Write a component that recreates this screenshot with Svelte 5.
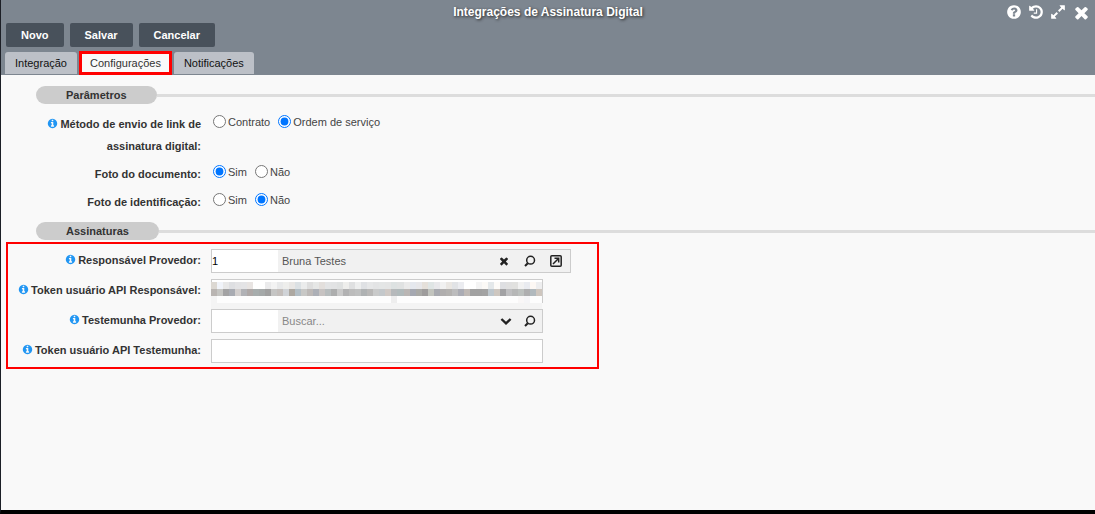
<script>

  let buttons = ["Novo", "Salvar", "Cancelar"]

  let tabs = ["Integração", "Configurações", "Notificações"]

  let active_tab = "Configurações"

  let method = "ordem"

  let document_photo = "sim"

  let id_photo = "nao"

  let provider_id = "1"

  let provider_name = "Bruna Testes"

  let provider_token = ""

  let witness_id = ""

  let witness_name = ""

  let witness_token = ""

  // 1792 unit icon grid
  let ring = "M1664 896q0 209-103 385.5t-279.5 279.5-385.5 103-385.5-103-279.5-279.5-103-385.5 103-385.5 279.5-279.5 385.5-103 385.5 103 279.5 279.5 103 385.5z"

  let icons = {
    help: "M1024 1376v-192q0-14-9-23t-23-9h-192q-14 0-23 9t-9 23v192q0 14 9 23t23 9h192q14 0 23-9t9-23zm256-672q0-88-55.5-163t-138.5-116-170-41q-243 0-371 213-15 24 8 42l132 100q7 6 19 6 16 0 25-12 53-68 86-92 34-24 86-24 48 0 85.5 26t37.5 59q0 38-20 61t-68 45q-63 28-115.5 86.5t-52.5 125.5v36q0 14 9 23t23 9h192q14 0 23-9t9-23q0-19 21.5-49.5t54.5-49.5q32-18 49-28.5t46-35 44.5-48 28-60.5 12.5-81z" + ring,
    history: "M1664 896q0 156-61 298t-164 245-245 164-298 61q-172 0-327-72.5t-264-204.5q-7-10-6.5-22.5t8.5-20.5l137-138q10-9 25-9 16 2 23 12 73 95 179 147t225 52q104 0 198.5-40.5t163.5-109.5 109.5-163.5 40.5-198.5-40.5-198.5-109.5-163.5-163.5-109.5-198.5-40.5q-98 0-188 35.5t-160 101.5l137 138q31 30 14 69-17 40-59 40h-448q-26 0-45-19t-19-45v-448q0-42 40-59 39-17 69 14l130 129q107-101 244.5-156.5t284.5-55.5q156 0 298 61t245 164 164 245 61 298zm-640-288v448q0 14-9 23t-23 9h-320q-14 0-23-9t-9-23v-64q0-14 9-23t23-9h224v-352q0-14 9-23t23-9h64q14 0 23 9t9 23z",
    expand: "M883 1056q0 13-10 23l-332 332 144 144q19 19 19 45t-19 45-45 19h-448q-26 0-45-19t-19-45v-448q0-26 19-45t45-19 45 19l144 144 332-332q10-10 23-10t23 10l114 114q10 10 10 23zm781-864v448q0 26-19 45t-45 19-45-19l-144-144-332 332q-10 10-23 10t-23-10l-114-114q-10-10-10-23t10-23l332-332-144-144q-19-19-19-45t19-45 45-19h448q26 0 45 19t19 45z",
    close: "M1490 1322q0 40-28 68l-136 136q-28 28-68 28t-68-28l-294-294-294 294q-28 28-68 28t-68-28l-136-136q-28-28-28-68t28-68l294-294-294-294q-28-28-28-68t28-68l136-136q28-28 68-28t68 28l294 294 294-294q28-28 68-28t68 28l136 136q28 28 28 68t-28 68l-294 294 294 294q28 28 28 68z",
    info: "M1152 1376v-160q0-14-9-23t-23-9h-96v-512q0-14-9-23t-23-9h-320q-14 0-23 9t-9 23v160q0 14 9 23t23 9h96v320h-96q-14 0-23 9t-9 23v160q0 14 9 23t23 9h448q14 0 23-9t9-23zm-128-896v-160q0-14-9-23t-23-9h-192q-14 0-23 9t-9 23v160q0 14 9 23t23 9h192q14 0 23-9t9-23z" + ring,
  }

  let tools = [
    { icon: "help", label: "Ajuda", size: 16 },
    { icon: "history", label: "Histórico", size: 16 },
    { icon: "expand", label: "Expandir", size: 16 },
    { icon: "close", label: "Fechar", size: 19 },
  ]

  // grey blocks that hide the token value, one row per string
  let mask = [
    "dcd8d2 f0f3f9 e8e8e8 dedfe2 e3e3e5 e4e4e6 e8e4e2 ffffff ffffff ebebec f3f3f3 e8e9ea eeeeec e9e7e5 dce1e4 ebecec dedede e6e7e6 e3dfdc e3e4e5 e2e3e4 dfe1e1 eeeeec dfe0e1 edeeee dfe1e4 e6e7e8 e3e4e5 e4e6e6 e4e5e5 dde2e2 e0e2e2 eaeaea e5e8ee e7e7ea e5e0da dfe5e5 e8e8eb f1f1f1 eae7e3 e1e3e6 ebecf0 ffffff ffffff f4f4f4 fbf9f6 e4e8ea fdfbf8 dedfe2 e0e0e0 e1e1df f1f1f1 e9ebf0 fdf8f4 eeeeef",
    "b9b5b2 c5c5c2 a3a3a4 a8abb2 d2cecd b1b2b6 aea8a7 a7adad a5a9a9 a0a0a0 c5c5c4 c4bfbc d0d3d7 ada8a1 b3bec5 c8c8c6 bdb9b7 adb0b7 c7c3c2 b8bdbe adaeae cacaca b2b2b3 bcbcbc bfc0c0 afb2b3 b9b8b7 c9caca c4c8cb d0c9c5 b6b9bb b1babb bab6b4 a5a8b1 a9a9a6 9e9c9c c2c4be a8aab0 b0aeae b4b2b0 bcbcbd abacb4 bfb9b5 a1a1a1 a1a1a1 a3a3a3 bec7cd cec7c0 a2a2a4 bfbfc1 b6b7b7 bcc0be aeaeaf b1b9bd cec6be",
    "f4f4f4 fdfdfd fdfdfd fdfdfd fdfdfd fdfdfd fdfdfd fdfdfd fdfdfd fdfdfd fdfdfd fdfdfd fdfdfd fdfdfd fdfdfd fdfdfd fdfdfd fdfdfd fdfdfd fdfdfd fdfdfd fdfdfd fdfdfd fdfdfd fdfdfd fdfdfd fdfdfd fdfdfd fdfdfd fdfdfd eeeeee fdfdfd fdfdfd fdfdfd fdfdfd fdfdfd fdfdfd fdfdfd fdfdfd fdfdfd fdfdfd fdfdfd fdfdfd fdfdfd fdfdfd fdfdfd fdfdfd fdfdfd fdfdfd fdfdfd fdfdfd f9f7f7 f5f5f7 fdfdfd fdfdfd",
  ].map((row) => row.split(" "))

</script>

<div class="window">

  <header>

    <div class="title-bar">
      <h1>Integrações de Assinatura Digital</h1>
      <div class="tools">
        {#each tools as tool}
          <button aria-label={tool.label}>
            <svg width={tool.size} height={tool.size} viewBox="0 0 1792 1792" fill-rule="evenodd"><path d={icons[tool.icon]} /></svg>
          </button>
        {/each}
      </div>
    </div>

    <div class="actions">
      {#each buttons as button}
        <button>{button}</button>
      {/each}
    </div>

    <nav>
      {#each tabs as tab}
        <button class:active={tab == active_tab} on:click={() => active_tab = tab}>{tab}</button>
      {/each}
    </nav>

  </header>

  <main>

    <h2><span>Parâmetros</span></h2>

    <div class="params">

      <div class="row" role="radiogroup" aria-labelledby="method-label">
        <span class="label" id="method-label">{@render info()}Método de envio de link de assinatura digital:</span>
        <div class="options">
          <label><input type="radio" bind:group={method} value="contrato">Contrato</label>
          <label><input type="radio" bind:group={method} value="ordem">Ordem de serviço</label>
        </div>
      </div>

      <div class="row" role="radiogroup" aria-labelledby="document-label">
        <span class="label" id="document-label">Foto do documento:</span>
        <div class="options">
          <label><input type="radio" bind:group={document_photo} value="sim">Sim</label>
          <label><input type="radio" bind:group={document_photo} value="nao">Não</label>
        </div>
      </div>

      <div class="row" role="radiogroup" aria-labelledby="id-label">
        <span class="label" id="id-label">Foto de identificação:</span>
        <div class="options">
          <label><input type="radio" bind:group={id_photo} value="sim">Sim</label>
          <label><input type="radio" bind:group={id_photo} value="nao">Não</label>
        </div>
      </div>

    </div>

    <h2><span>Assinaturas</span></h2>

    <div class="signatures">

      <div class="row">
        <label class="label" for="provider">{@render info()}Responsável Provedor:</label>
        <div class="field lookup wide">
          <input class="code" id="provider" bind:value={provider_id}>
          <input class="name" aria-label="Nome do responsável" bind:value={provider_name}>
          <button aria-label="Limpar">
            <svg width="12" height="12" viewBox="0 0 1792 1792"><path d={icons.close} /></svg>
          </button>
          <button aria-label="Buscar">{@render search()}</button>
          <button aria-label="Abrir">
            <svg class="line" width="12" height="12" viewBox="0 0 12 12">
              <rect x="0.8" y="0.8" width="10.4" height="10.4" rx="1" />
              <path d="M3 9l5-5M4.5 3.3h4.2v4.2" />
            </svg>
          </button>
        </div>
      </div>

      <div class="row">
        <label class="label" for="provider-token">{@render info()}Token usuário API Responsável:</label>
        <div class="field">
          <input id="provider-token" bind:value={provider_token}>
          <div class="mask">
            {#each mask as row}
              <div class="mask-row">
                {#each row as color}
                  <i style="background: #{color}"></i>
                {/each}
              </div>
            {/each}
            <div class="mask-row last"></div>
          </div>
        </div>
      </div>

      <div class="row">
        <label class="label" for="witness">{@render info()}Testemunha Provedor:</label>
        <div class="field lookup">
          <input class="code" id="witness" bind:value={witness_id}>
          <input class="name" aria-label="Nome da testemunha" placeholder="Buscar..." bind:value={witness_name}>
          <button aria-label="Mostrar opções">
            <svg class="line chevron" width="12" height="12" viewBox="0 0 12 12"><path d="M1.4 4L6 8.4 10.6 4" /></svg>
          </button>
          <button aria-label="Buscar">{@render search()}</button>
        </div>
      </div>

      <div class="row">
        <label class="label" for="witness-token">{@render info()}Token usuário API Testemunha:</label>
        <div class="field">
          <input id="witness-token" bind:value={witness_token}>
        </div>
      </div>

    </div>

  </main>

</div>

{#snippet info()}
  <svg class="info" width="11" height="11" viewBox="0 0 1792 1792" fill-rule="evenodd"><path d={icons.info} /></svg>
{/snippet}

{#snippet search()}
  <svg class="line" width="12" height="12" viewBox="0 0 12 12">
    <circle cx="6.6" cy="5.2" r="3.9" />
    <path class="handle" d="M3.8 8.2L1 11" />
  </svg>
{/snippet}

<style>

  :global(body) {
    margin: 0;
  }

  * {
    box-sizing: border-box;
  }

  .window {
    display: flex;
    flex-direction: column;

    min-height: 100vh;

    border-left: 1px solid #1c1f26;
    border-bottom: 4px solid black;

    background-color: #f9f9f9;

    font-family: "Liberation Sans", Arial, sans-serif;
    font-size: 11px;
    color: #444;
  }

  button, input {
    margin: 0;
    padding: 0;

    border: none;

    font: inherit;
  }

  button {
    cursor: pointer;
  }

  svg {
    display: block;

    fill: currentColor;
  }

  header {
    background-color: #7d8690;
  }

  .title-bar {
    display: grid;
    grid-template-columns: 1fr auto 1fr;
    align-items: center;

    height: 23px;
  }

  h1 {
    grid-column: 2;

    margin: 0;

    font-size: 12px;
    color: white;

    text-shadow: 1px 1px 3px #222;
  }

  .tools {
    display: flex;
    justify-content: flex-end;
    align-items: center;
    gap: 6px;

    padding: 1px 4px 0 0;
  }

  .tools button {
    background: none;

    color: white;
  }

  .actions {
    display: flex;
    gap: 6px;

    padding-left: 5px;
  }

  .actions button {
    height: 24px;

    padding: 0 15px;

    border-radius: 2px;

    background-color: #48515b;

    font-weight: bold;
    color: white;
  }

  nav {
    display: flex;
    align-items: flex-end;
    gap: 3px;

    padding: 5px 4px 1px;
  }

  nav button {
    height: 22px;

    padding: 0 10px;

    border-radius: 3px 3px 0 0;

    background-color: #bcc0c7;

    color: #111;
  }

  nav .active {
    border-radius: 0;

    outline: 3px solid red;
    outline-offset: -2px;

    background-color: #f9f9f9;

    color: #333;
  }

  main {
    flex: 1;

    padding-top: 11px;
  }

  h2 {
    display: flex;
    align-items: center;

    margin: 0 0 0 35px;

    font-size: 11px;
    line-height: 18px;
    color: #333;
  }

  h2::after {
    content: "";

    flex: 1;

    height: 3px;

    background-color: #ddd;
  }

  h2 span {
    padding: 0 30px;

    border-radius: 9px;

    background-color: #ccc;
  }

  .params {
    display: flex;
    flex-direction: column;
    gap: 6px;

    padding: 9px 0 9px 12px;
  }

  .row {
    display: flex;
    align-items: flex-start;
    gap: 10px;
  }

  .label {
    flex: none;

    width: 188px;

    font-weight: bold;
    line-height: 22px;
    text-align: right;
    color: #333;
  }

  .info {
    display: inline-block;

    margin-right: 2px;

    vertical-align: -1px;

    color: #2196f3;
  }

  .options {
    display: flex;
    gap: 8px;

    padding-left: 2px;

    line-height: 18px;
  }

  .options label {
    display: flex;
    gap: 2px;
  }

  .options input {
    width: 13px;
    height: 13px;

    margin-top: 2px;
  }

  /* box around the four signature fields */
  .signatures {
    display: flex;
    flex-direction: column;
    gap: 6px;

    max-width: 593px;

    margin: 2px 0 0 5px;
    padding: 5px 5px 4px;

    border: 2px solid red;
  }

  .field {
    position: relative;

    display: flex;

    flex: 0 1 332px;

    height: 24px;

    border: 1px solid #ccc;

    background-color: white;
  }

  .field input {
    flex: 1;

    min-width: 0;

    background: none;

    color: black;
  }

  .lookup {
    background-color: #f1f1f1;
  }

  .wide {
    flex-basis: 360px;

    padding-right: 1px;
  }

  .field .code {
    flex: 0 0 66px;

    background-color: white;
  }

  .field .name {
    padding-left: 4px;

    color: #555;
  }

  .name::placeholder {
    color: #888;
  }

  .lookup button {
    display: flex;
    justify-content: center;
    align-items: center;

    width: 24px;

    background: none;

    color: #222;
  }

  .wide button {
    width: 26px;
  }

  .line {
    fill: none;
    stroke: currentColor;
    stroke-width: 1.5;
  }

  .handle {
    stroke-width: 2;
  }

  .chevron {
    stroke-width: 2.4;
  }

  .mask {
    position: absolute;
    top: 2px;
    left: -1px;
    right: 0;

    overflow: hidden;
  }

  .mask-row {
    display: flex;

    height: 7px;
  }

  .mask-row i {
    flex: 1;
  }

  .last {
    background-color: #f4f4f4;
  }

</style>
